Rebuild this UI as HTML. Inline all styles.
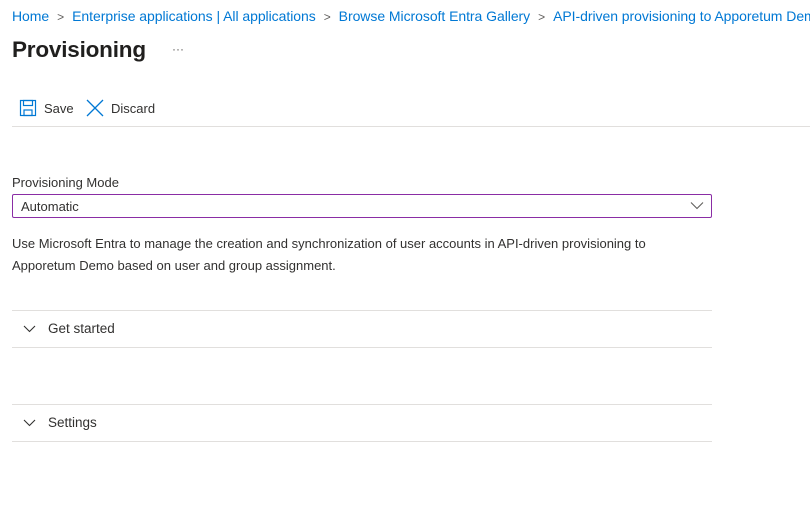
<!DOCTYPE html>
<html><head><style>
*{margin:0;padding:0;box-sizing:border-box}
body{width:810px;height:518px;overflow:hidden;background:#fff;font-family:"Liberation Sans",sans-serif;color:#323130;position:relative}
.a{position:absolute;white-space:nowrap}
.bc{top:8px;left:12px;font-size:14px;color:#0078d4;letter-spacing:-0.05px}
.bc span.s{color:#605e5c;margin:0 8px;font-size:12px}
h1{position:absolute;left:12px;top:37px;font-size:22.5px;font-weight:600;color:#201f1e;letter-spacing:-0.2px}
.line{position:absolute;left:12px;height:1px;background:#e1dfdd}
</style></head><body>
<div class="a bc">Home<span class="s">&gt;</span>Enterprise applications | All applications<span class="s">&gt;</span>Browse Microsoft Entra Gallery<span class="s">&gt;</span>API-driven provisioning to Apporetum Demo</div>
<h1>Provisioning</h1>
<div class="a" style="left:172px;top:42px;font-size:12px;color:#605e5c">···</div>
<svg class="a" style="left:19px;top:99px" width="18" height="18" viewBox="0 0 18 18" fill="none" stroke="#0078d4" stroke-width="1.2"><rect x="1.5" y="1.5" width="15" height="15"/><rect x="4.5" y="1.5" width="9" height="5"/><rect x="5" y="11" width="8" height="5.5"/></svg>
<div class="a" style="left:44px;top:101px;font-size:13px">Save</div>
<svg class="a" style="left:86px;top:99px" width="18" height="18" viewBox="0 0 18 18" stroke="#0078d4" stroke-width="1.3"><path d="M1 1L17 17M17 1L1 17"/></svg>
<div class="a" style="left:111px;top:101px;font-size:13px">Discard</div>
<div class="line" style="top:126px;width:798px"></div>
<div class="a" style="left:12px;top:175px;font-size:13px">Provisioning Mode</div>
<div class="a" style="left:12px;top:194px;width:700px;height:24px;border:1px solid #8a2da5;border-radius:2px"></div>
<div class="a" style="left:21px;top:199px;font-size:13px">Automatic</div>
<svg class="a" style="left:690px;top:201px" width="14" height="9" viewBox="0 0 14 9" fill="none" stroke="#605e5c" stroke-width="1.1"><path d="M1 1.5L7 7.5L13 1.5"/></svg>
<div class="a" style="left:12px;top:233px;font-size:13px;line-height:22px">Use Microsoft Entra to manage the creation and synchronization of user accounts in API-driven provisioning to<br>Apporetum Demo based on user and group assignment.</div>
<div class="line" style="top:310px;width:700px"></div>
<svg class="a" style="left:23px;top:325px" width="13" height="8" viewBox="0 0 13 8" fill="none" stroke="#323130" stroke-width="1.1"><path d="M1 1L6.5 6.5L12 1"/></svg>
<div class="a" style="left:48px;top:321px;font-size:13.5px">Get started</div>
<div class="line" style="top:347px;width:700px"></div>
<div class="line" style="top:404px;width:700px"></div>
<svg class="a" style="left:23px;top:419px" width="13" height="8" viewBox="0 0 13 8" fill="none" stroke="#323130" stroke-width="1.1"><path d="M1 1L6.5 6.5L12 1"/></svg>
<div class="a" style="left:48px;top:415px;font-size:13.5px">Settings</div>
<div class="line" style="top:441px;width:700px"></div>
</body></html>
